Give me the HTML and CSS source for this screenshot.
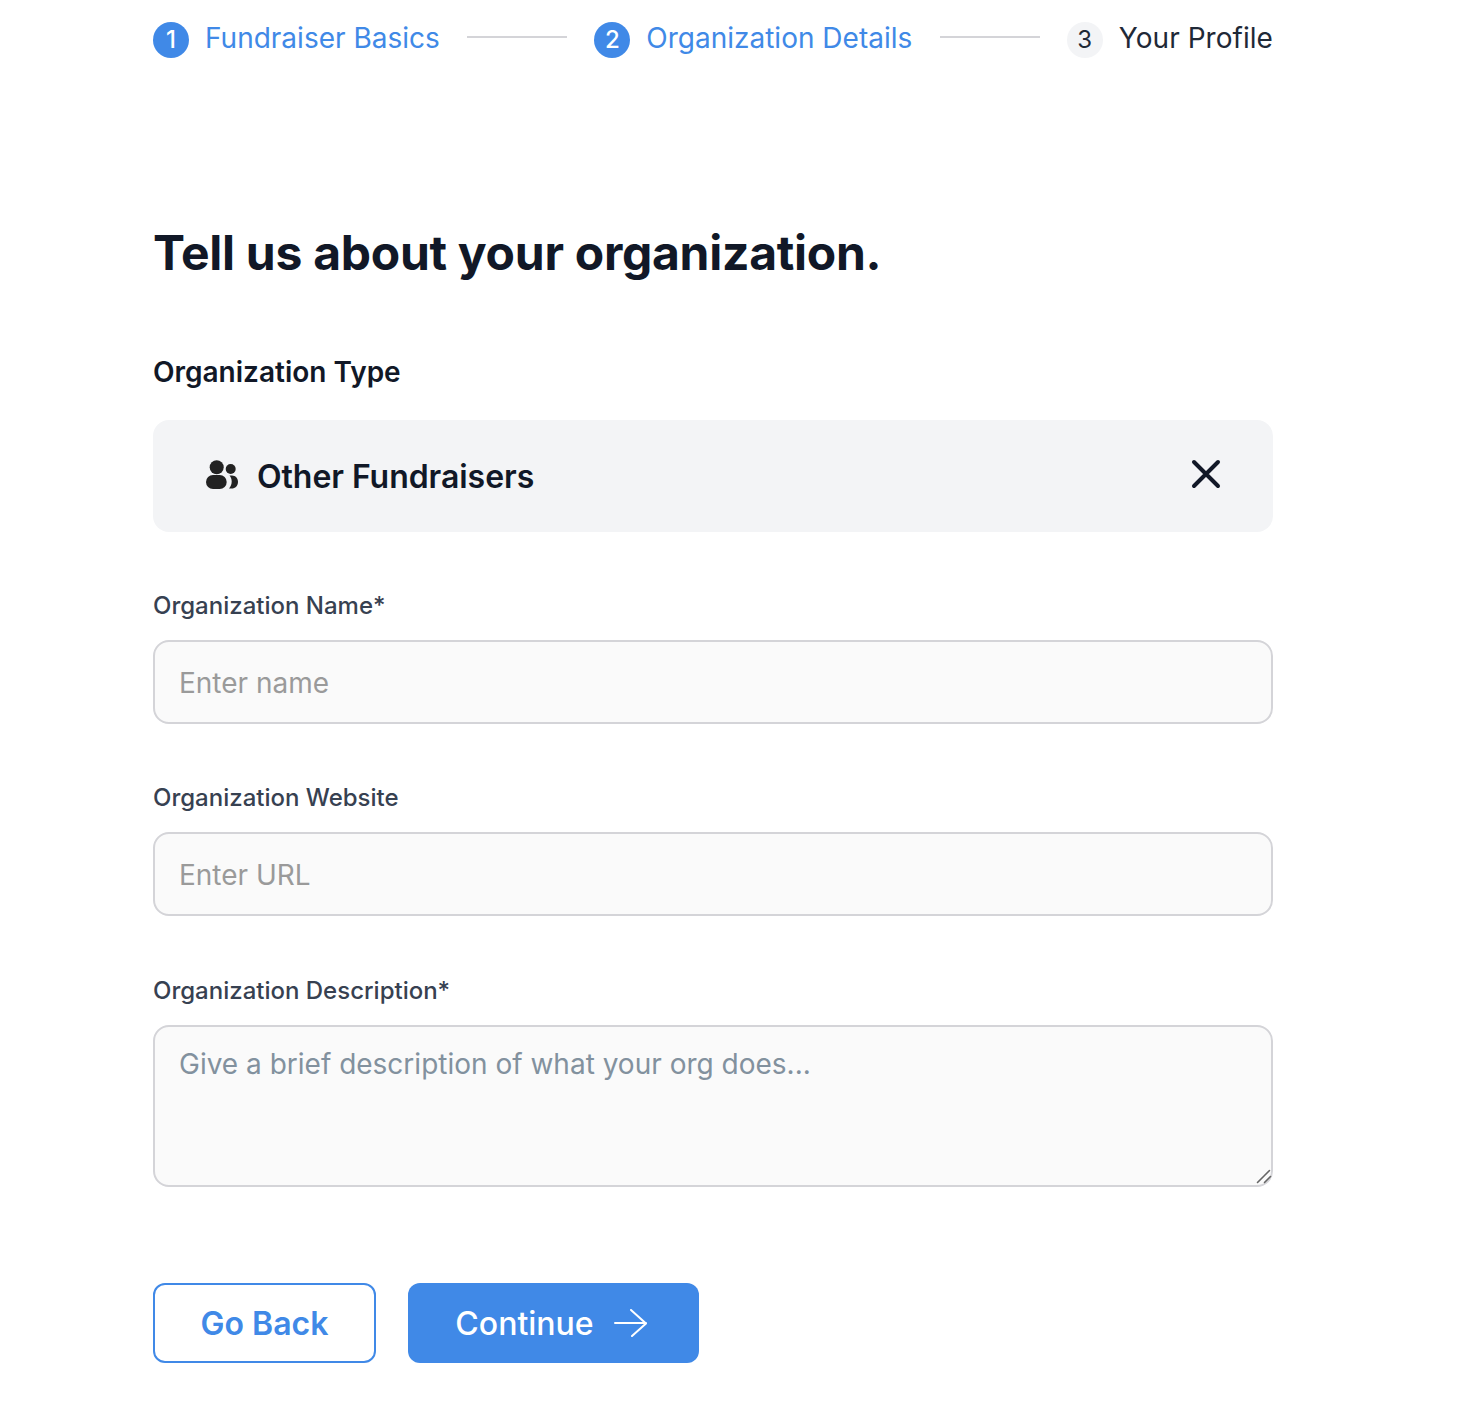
FILE: index.html
```html
<!DOCTYPE html>
<html lang="en">
<head>
<meta charset="utf-8">
<title>Tell us about your organization</title>
<link rel="stylesheet" href="styles.css">
</head>
<body>
<main class="page">
  <nav class="stepper">
    <div class="step step-active"><span class="num">1</span><span class="step-label">Fundraiser Basics</span></div>
    <span class="rule"></span>
    <div class="step step-active"><span class="num">2</span><span class="step-label">Organization Details</span></div>
    <span class="rule"></span>
    <div class="step step-last"><span class="num">3</span><span class="step-label">Your Profile</span></div>
  </nav>
  <h1 class="title">Tell us about your organization.</h1>
  <h2 class="type-label">Organization Type</h2>
  <div class="type-box">
    <svg class="users" viewBox="0 0 32 29" width="32" height="29" aria-hidden="true"><circle cx="10.700" cy="7.300" r="7" fill="#222"/><circle cx="24.700" cy="9" r="5" fill="#222"/><rect x="0" y="15" width="20.700" height="14" rx="7" fill="#222"/><path fill="#222" d="M23.500 15.500h2.500c3.500 0 6 2.800 6 6.200 0 4-2.700 6.800-6.500 6.800h-2.500c1.700-2 2.700-4.300 2.700-7 0-2.400-.8-4.400-2.200-6z"/></svg>
    <span class="type-name">Other Fundraisers</span>
    <svg class="close" viewBox="0 0 30 30" width="30" height="30" aria-hidden="true"><path d="M3 3l24 24M27 3L3 27" stroke="#111827" stroke-width="4" stroke-linecap="round" fill="none"/></svg>
  </div>
  <label class="field field-first"><span class="field-label">Organization Name*</span><input class="control" type="text" placeholder="Enter name"></label>
  <label class="field"><span class="field-label">Organization Website</span><input class="control" type="text" placeholder="Enter URL"></label>
  <label class="field field-last"><span class="field-label">Organization Description*</span>
    <span class="area-wrap"><textarea class="control area" placeholder="Give a brief description of what your org does..."></textarea><svg class="grip" viewBox="0 0 16 18" width="16" height="18" aria-hidden="true"><path d="M1.500 14.500l12-12M8.500 14.500l6-6" stroke="#666" stroke-width="1.600" fill="none" stroke-linecap="round"/></svg></span>
  </label>
  <div class="actions">
    <button class="btn btn-ghost" type="button">Go Back</button>
    <button class="btn btn-solid" type="button">Continue<svg viewBox="0 0 34 28" width="34" height="28" aria-hidden="true"><path d="M1 14h31M17 1l15 13.500-14 12.500" stroke="#fff" stroke-width="2" fill="none" stroke-linecap="round" stroke-linejoin="round"/></svg></button>
  </div>
</main>
</body>
</html>
```
FILE: styles.css
```css
* { box-sizing: border-box; }
html, body { margin: 0; background: #fff; }
body { font-family: Inter, "Liberation Sans", sans-serif; color: #111827; }
.page { width: 1120px; margin-left: 153px; padding-top: 22px; height: 1402px; }
.stepper { display: flex; align-items: flex-start; justify-content: space-between; height: 36px; }
.step { display: flex; gap: 16px; align-items: flex-start; height: 36px; }
.num { width: 36px; height: 36px; border-radius: 50%; background: #f3f4f6; color: #1f2937; font-size: 24px; line-height: 36px; text-align: center; }
.step-active .num { background: #4089e7; color: #fff; font-weight: 500; }
.step-label { font-size: 28px; line-height: 32px; color: #1f2937; }
.step-last .step-label { letter-spacing: 0.05px; }
.step-active .step-label { color: #4089e7; }
.rule { width: 100px; height: 2px; margin-top: 14px; background: #d4d4d8; }
.title { margin: 166px 0 0; font-size: 48px; line-height: 58px; font-weight: 700; color: #111827; letter-spacing: -0.28px; }
.type-label { margin: 72px 0 0; font-size: 28px; line-height: 36px; font-weight: 600; color: #111827; }
.type-box { display: flex; align-items: center; margin-top: 30px; height: 112px; padding: 0 52px; background: #f3f4f6; border-radius: 16px; }
.users { flex: none; margin: -3px 19px 0 1px; }
.type-name { flex: 1; font-size: 32px; font-weight: 600; line-height: 40px; color: #111827; margin-top: 2px; letter-spacing: -0.05px; }
.close { flex: none; margin-top: -4px; }
.field { display: block; margin-top: 58px; }
.field-last { margin-top: 59px; }
.field-label { display: block; font-size: 24px; line-height: 32px; font-weight: 500; color: #374151; margin-bottom: 18px; }
.control { display: block; width: 100%; height: 84px; padding: 2px 24px 0; background: #fafafa; border: 2px solid #d4d4d8; border-radius: 16px; font-family: inherit; font-size: 28px; color: #111827; outline: none; margin: 0; }
.control::placeholder { color: #9a9a9a; opacity: 1; }
.area-wrap { display: block; position: relative; }
.area { height: 162px; padding: 19px 24px; line-height: 36px; resize: none; }
.area::placeholder { color: #82919e; }
.grip { position: absolute; right: 1px; bottom: 1px; pointer-events: none; }
.actions { display: flex; gap: 32px; margin-top: 96px; }
.btn { display: flex; align-items: center; justify-content: center; height: 80px; border-radius: 12px; font-family: inherit; font-size: 32px; font-weight: 600; padding: 0; }
.btn-ghost { width: 223px; background: #fff; border: 2px solid #4089e7; color: #4089e7; }
.btn-solid { width: 291px; gap: 20px; padding-right: 4px; background: #4089e7; border: 0; color: #fff; font-weight: 500; }
```
